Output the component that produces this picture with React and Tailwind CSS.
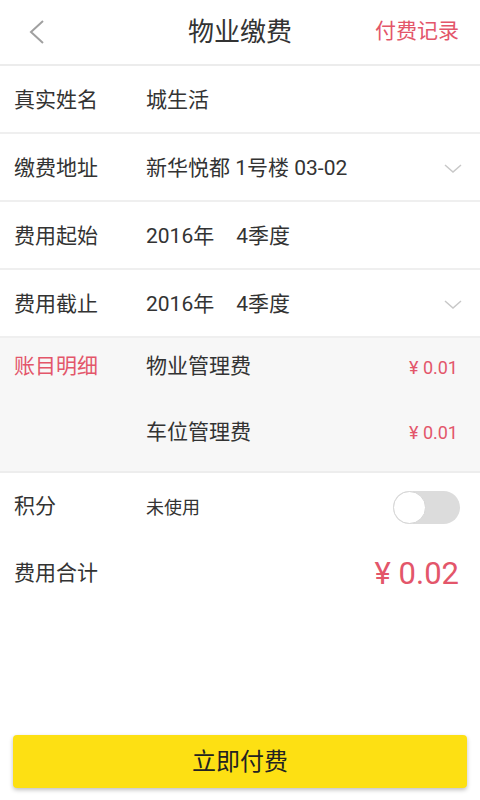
import React from 'react';

const font = { fontFamily: 'Roboto, "Noto Sans CJK SC", "Noto Sans", sans-serif' };

const ChevronDown = () => (
  <svg width="18" height="10" viewBox="0 0 18 10" className="mr-[18px]">
    <path d="M1 1 L9 8 L17 1" fill="none" stroke="#c8c8c8" strokeWidth="1.5" />
  </svg>
);

const Row = ({ label, value, arrow }) => (
  <div className="flex items-center h-[68px] pt-[3px] border-b-2 border-[#efefef] shrink-0">
    <div className="w-[146px] pl-[14px] text-[21px] text-[#333]">{label}</div>
    <div className="flex-1 text-[21px] text-[#333]">{value}</div>
    {arrow && <ChevronDown />}
  </div>
);

export default function App() {
  return (
    <div className="w-[480px] h-[800px] bg-white flex flex-col overflow-hidden" style={font}>
      {/* Header */}
      <div className="relative flex items-center justify-center h-[66px] border-b-2 border-[#ececec] shrink-0">
        <svg width="18" height="26" viewBox="0 0 18 26" className="absolute left-[28px] top-[19px]">
          <path d="M15 2 L3 13 L15 24" fill="none" stroke="#a0a0a0" strokeWidth="2" />
        </svg>
        <div className="text-[26px] text-[#333]">物业缴费</div>
        <div className="absolute right-[21px] top-[16px] text-[21px] text-[#e3566a]">付费记录</div>
      </div>

      <Row label="真实姓名" value="城生活" />
      <Row label="缴费地址" value="新华悦都 1号楼 03-02" arrow />
      <Row label="费用起始" value={<span>2016年<span className="ml-[22px]">4季度</span></span>} />
      <Row label="费用截止" value={<span>2016年<span className="ml-[22px]">4季度</span></span>} arrow />

      {/* Detail */}
      <div className="bg-[#f7f7f7] border-b-2 border-[#ededed] h-[135px] shrink-0">
        <div className="flex items-center h-[58px]">
          <div className="w-[146px] pl-[14px] text-[21px] text-[#e3566a]">账目明细</div>
          <div className="flex-1 text-[21px] text-[#333]">物业管理费</div>
          <div className="pr-[22px] text-[18px] text-[#e3566a]">¥ 0.01</div>
        </div>
        <div className="flex items-center h-[75px] pb-[2px]">
          <div className="w-[146px]" />
          <div className="flex-1 text-[21px] text-[#333]">车位管理费</div>
          <div className="pr-[22px] text-[18px] text-[#e3566a]">¥ 0.01</div>
        </div>
      </div>

      {/* Points */}
      <div className="flex items-center h-[68px] shrink-0">
        <div className="w-[146px] pl-[14px] text-[21px] text-[#333]">积分</div>
        <div className="flex-1 text-[18px] text-[#333]">未使用</div>
        <div className="mr-[20px] w-[67px] h-[33px] rounded-full bg-[#dcdcdc] relative">
          <div className="absolute left-0 top-0 w-[33px] h-[33px] rounded-full bg-white border border-[#d6d6d6]" />
        </div>
      </div>

      {/* Total */}
      <div className="flex items-center h-[66px] shrink-0">
        <div className="w-[146px] pl-[14px] text-[21px] text-[#333]">费用合计</div>
        <div className="flex-1" />
        <div className="pr-[21px] text-[31px] text-[#e3566a]">¥ 0.02</div>
      </div>

      <div className="flex-1" />

      <div className="px-[13px] pb-[12px]">
        <button className="w-full h-[53px] rounded-[4px] bg-[#fde013] shadow-[0_2px_4px_rgba(0,0,0,0.25)] text-[24px] text-[#222]">
          立即付费
        </button>
      </div>
    </div>
  );
}
